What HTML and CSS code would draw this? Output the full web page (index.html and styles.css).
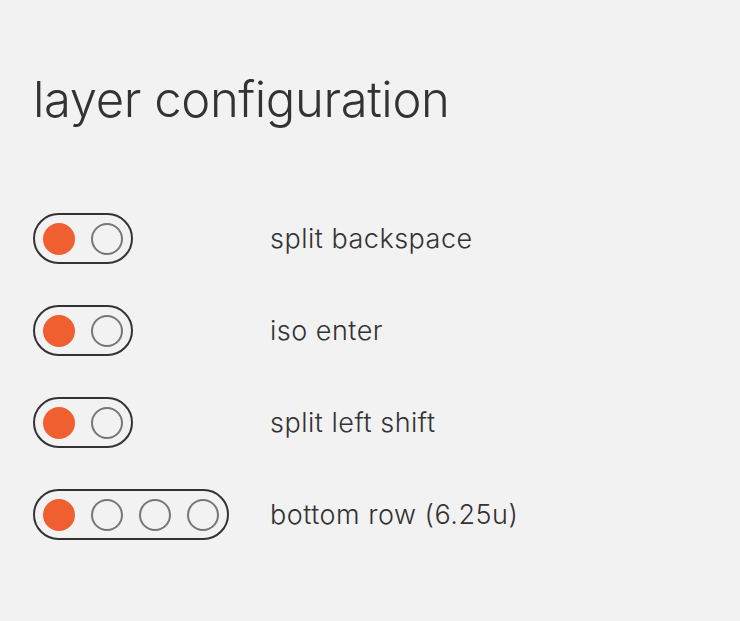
FILE: index.html
```html
<!DOCTYPE html>
<html>
<head>
<meta charset="utf-8">
<link rel="stylesheet" href="styles.css">
</head>
<body>
<main class="page">
  <h1 class="title">layer configuration</h1>
  <div class="options">
    <div class="option">
      <div class="toggle"><span class="dot on"></span><span class="dot"></span></div>
      <span class="label">split backspace</span>
    </div>
    <div class="option">
      <div class="toggle"><span class="dot on"></span><span class="dot"></span></div>
      <span class="label">iso enter</span>
    </div>
    <div class="option">
      <div class="toggle"><span class="dot on"></span><span class="dot"></span></div>
      <span class="label">split left shift</span>
    </div>
    <div class="option">
      <div class="toggle"><span class="dot on"></span><span class="dot"></span><span class="dot"></span><span class="dot"></span></div>
      <span class="label">bottom row (6.25u)</span>
    </div>
  </div>
</main>
</body>
</html>
```
FILE: styles.css
```css
html, body {
  margin: 0;
  background: #f2f2f2;
}
body {
  font-family: Inter, "Noto Sans", sans-serif;
  color: #333;
}
.page {
  padding: 70px 33px 0 33px;
}
.title {
  margin: 0;
  font-size: 49px;
  font-weight: 300;
  line-height: 60px;
  letter-spacing: -0.4px;
}
.options {
  margin-top: 83px;
  display: flex;
  flex-direction: column;
  gap: 41px;
}
.option {
  display: grid;
  grid-template-columns: 237px auto;
  align-items: center;
}
.toggle {
  justify-self: start;
  display: flex;
  gap: 16px;
  padding: 7.5px 8px;
  border: 2px solid #333;
  border-radius: 26px;
}
.dot {
  width: 32px;
  height: 32px;
  box-sizing: border-box;
  border-radius: 50%;
  border: 2px solid #777;
}
.dot.on {
  background: #f05f30;
  border-color: #f05f30;
}
.label {
  font-size: 27px;
  font-weight: 300;
  letter-spacing: 0.5px;
}
```
